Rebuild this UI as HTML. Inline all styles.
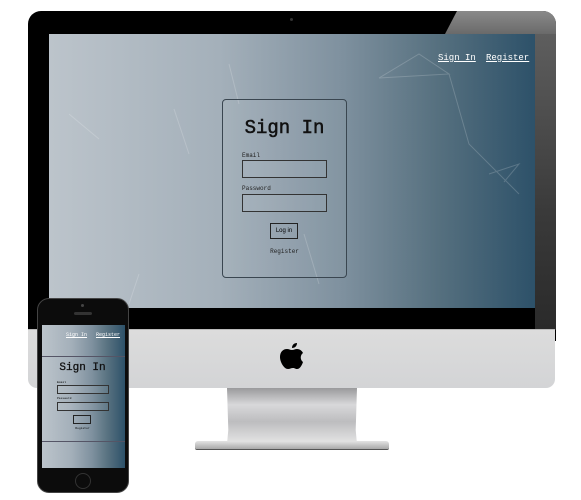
<!DOCTYPE html>
<html><head><style>
body{margin:0;width:581px;height:500px;background:#fff;position:relative;overflow:hidden;font-family:"Liberation Mono",monospace}
.a{position:absolute}
.scr{background:linear-gradient(90deg,#bcc4cb 0%,#a4b0ba 35%,#7f919f 60%,#56707f 80%,#2d5169 100%)}
.lab{font-size:6px;color:#222}
.inp{border:1px solid #333;background:rgba(255,255,255,0.06)}
a{white-space:nowrap}
</style></head><body>
<div class="a" style="left:28px;top:11px;width:528px;height:330px;background:#000;border-radius:13px 13px 0 0"></div>
<div class="a" style="left:445px;top:11px;width:111px;height:23px;background:linear-gradient(180deg,#8a8a8a,#6a6a6a);clip-path:polygon(12px 0,100% 0,100% 100%,0 100%);border-radius:0 13px 0 0"></div>
<div class="a" style="left:535px;top:34px;width:21px;height:296px;background:linear-gradient(180deg,#5e5e5e,#3a3a3a 60%,#2a2a2a)"></div>
<div class="a" style="left:290px;top:18px;width:3px;height:3px;border-radius:50%;background:#333"></div>
<div class="a" style="left:28px;top:329px;width:527px;height:58px;background:linear-gradient(180deg,#dcdcdc,#d3d4d6);border-radius:0 0 9px 9px;border-top:1px solid #bbb"></div>
<svg class="a" style="left:280px;top:341px" width="25" height="32" viewBox="0 0 25 32"><path d="M17 2c0 3-2 5-5 5 0-3 2-5 5-5zM12 9c2 0 3-1 5-1 3 0 5 2 6 4-3 2-3 7 0 9-1 3-3 7-6 7-2 0-2-1-4-1s-3 1-5 1C4 28 0 21 0 16c0-5 3-8 7-8 2 0 3 1 5 1z" fill="#000"/></svg>
<div class="a" style="left:227px;top:388px;width:130px;height:56px;background:linear-gradient(180deg,#9a9a9c,#d8d8da 30%,#bdbdbf 60%,#e6e6e6);clip-path:polygon(0 0,100% 0,99% 75%,100% 100%,0 100%,1% 75%)"></div>
<div class="a" style="left:195px;top:441px;width:194px;height:8px;background:linear-gradient(180deg,#e4e4e4,#a8a8a8);border-radius:3px 3px 2px 2px;border-bottom:1px solid #555"></div>
<div class="a scr" style="left:49px;top:34px;width:486px;height:274px;overflow:hidden">
<svg class="a" style="left:0;top:0" width="486" height="274"><g stroke="rgba(255,255,255,.18)" stroke-width="1" fill="none"><path d="M330 44L370 20 400 40 330 44M180 30L190 70M20 80L50 105M400 40L420 110 470 160M440 140L470 130 455 148M125 75L140 120M90 240L80 270M255 200L270 250"/></g></svg>
<a class="a" style="left:389px;top:19px;color:#fff;font-size:9px;text-decoration:underline">Sign In</a>
<a class="a" style="left:437px;top:19px;color:#fff;font-size:9px;text-decoration:underline">Register</a>
<div class="a" style="left:173px;top:65px;width:123px;height:177px;border:1px solid #3a4650;border-radius:4px;background:rgba(255,255,255,.04)">
<div class="a" style="left:0;width:123px;top:17px;text-align:center;font-size:19px;color:#111;-webkit-text-stroke:0.5px #111">Sign In</div>
<div class="a lab" style="left:19px;top:52px">Email</div>
<div class="a inp" style="left:19px;top:60px;width:83px;height:16px"></div>
<div class="a lab" style="left:19px;top:85px">Password</div>
<div class="a inp" style="left:19px;top:94px;width:83px;height:16px"></div>
<div class="a" style="left:47px;top:123px;width:26px;height:14px;border:1px solid #222;font-family:'Liberation Sans',sans-serif;font-size:6px;text-align:center;line-height:14px">Log in</div>
<div class="a lab" style="left:0;width:123px;text-align:center;top:148px">Register</div>
</div>
</div>
<div class="a" style="left:37px;top:298px;width:92px;height:195px;background:#0c0c0c;border-radius:12px;border:1px solid #444;box-sizing:border-box"></div>
<div class="a" style="left:81px;top:304px;width:3px;height:3px;background:#444;border-radius:50%"></div>
<div class="a" style="left:74px;top:312px;width:18px;height:3px;background:#333;border-radius:2px"></div>
<div class="a" style="left:75px;top:473px;width:14px;height:14px;border:1px solid #333;border-radius:50%"></div>
<div class="a scr" style="left:42px;top:325px;width:83px;height:143px;overflow:hidden">
<a class="a" style="left:24px;top:7px;color:#fff;font-size:5px;text-decoration:underline">Sign In</a>
<a class="a" style="left:54px;top:7px;color:#fff;font-size:5px;text-decoration:underline">Register</a>
<div class="a" style="left:-1px;top:31px;width:85px;height:84px;border-top:1px solid #556;border-bottom:1px solid #556">
<div class="a" style="left:0;width:83px;top:5px;text-align:center;font-size:11px;color:#111;-webkit-text-stroke:0.3px #111">Sign In</div>
<div class="a" style="left:16px;top:24px;font-size:3px">Email</div>
<div class="a inp" style="left:16px;top:28px;width:50px;height:7px"></div>
<div class="a" style="left:16px;top:40px;font-size:3px">Password</div>
<div class="a inp" style="left:16px;top:45px;width:50px;height:7px"></div>
<div class="a" style="left:32px;top:58px;width:16px;height:7px;border:1px solid #222"></div>
<div class="a" style="left:0;width:83px;top:70px;text-align:center;font-size:3px">Register</div>
</div>
</div>
</body></html>
